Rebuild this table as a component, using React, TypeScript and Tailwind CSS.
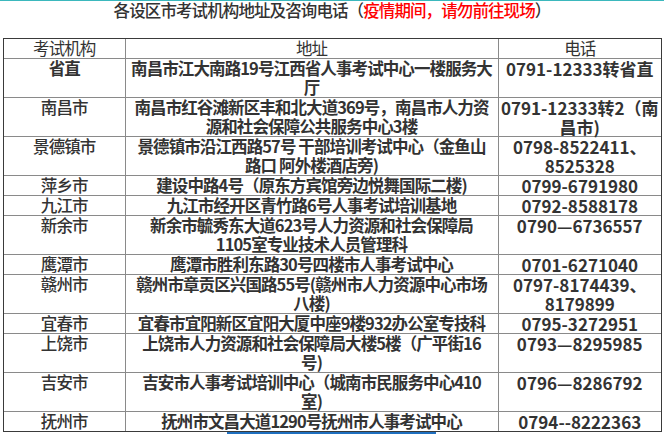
const ROWS: { city: string; addr: string[]; tel: string[]; bold?: boolean }[] = [
  { city: "省直", bold: true, addr: ["南昌市江大南路19号江西省人事考试中心一楼服务大", "厅"], tel: ["0791-12333转省直"] },
  { city: "南昌市", addr: ["南昌市红谷滩新区丰和北大道369号，南昌市人力资", "源和社会保障公共服务中心3楼"], tel: ["0791-12333转2（南", "昌市)"] },
  { city: "景德镇市", addr: ["景德镇市沿江西路57号 干部培训考试中心（金鱼山", "路口 阿外楼酒店旁)"], tel: ["0798-8522411、", "8525328"] },
  { city: "萍乡市", addr: ["建设中路4号（原东方宾馆旁边悦舞国际二楼)"], tel: ["0799-6791980"] },
  { city: "九江市", addr: ["九江市经开区青竹路6号人事考试培训基地"], tel: ["0792-8588178"] },
  { city: "新余市", addr: ["新余市毓秀东大道623号人力资源和社会保障局", "1105室专业技术人员管理科"], tel: ["0790—6736557"] },
  { city: "鹰潭市", addr: ["鹰潭市胜利东路30号四楼市人事考试中心"], tel: ["0701-6271040"] },
  { city: "赣州市", addr: ["赣州市章贡区兴国路55号(赣州市人力资源中心市场", "八楼)"], tel: ["0797-8174439、", "8179899"] },
  { city: "宜春市", addr: ["宜春市宜阳新区宜阳大厦中座9楼932办公室专技科"], tel: ["0795-3272951"] },
  { city: "上饶市", addr: ["上饶市人力资源和社会保障局大楼5楼（广平街16", "号)"], tel: ["0793—8295985"] },
  { city: "吉安市", addr: ["吉安市人事考试培训中心（城南市民服务中心410", "室)"], tel: ["0796—8286792"] },
  { city: "抚州市", addr: ["抚州市文昌大道1290号抚州市人事考试中心"], tel: ["0794--8222363"] },
];

function Lines({ lines }: { lines: string[] }) {
  return (
    <>
      {lines.map((l, i) => (
        <div key={i} className="whitespace-nowrap">{l}</div>
      ))}
    </>
  );
}

export default function App() {
  return (
    <div className="w-[664px] h-[435px] overflow-hidden bg-white border-t border-[#3bb8bd] text-[#333333] font-['Noto_Sans_CJK_SC',sans-serif] text-[16.5px] leading-[19px] tracking-[-0.9px]">
      {/* Title */}
      <div className="text-center font-medium mb-[18px]">
        各设区市考试机构地址及咨询电话（<span className="text-[#ff0000]">疫情期间，请勿前往现场</span>）
      </div>

      {/* Table */}
      <div className="ml-[3px] w-[659px] border border-[#3a3a3a]">
        <table className="w-full table-fixed border-collapse">
          <colgroup>
            <col className="w-[121px]" />
            <col className="w-[373px]" />
            <col />
          </colgroup>
          <thead>
            <tr className="border-b border-[#8a8a8a]">
              <th className="font-normal border-r border-[#8a8a8a] p-0">考试机构</th>
              <th className="font-normal border-r border-[#8a8a8a] p-0">地址</th>
              <th className="font-normal p-0">电话</th>
            </tr>
          </thead>
          <tbody>
            {ROWS.map((r, i) => (
              <tr key={r.city} className={i < ROWS.length - 1 ? "border-b border-[#8a8a8a]" : ""}>
                <td className={`align-top text-center p-0 border-r border-[#8a8a8a] ${r.bold ? "font-bold" : "font-medium"}`}>
                  {r.city}
                </td>
                <td className="align-top text-center p-0 border-r border-[#8a8a8a] font-semibold">
                  <Lines lines={r.addr} />
                </td>
                <td className="align-top text-center p-0 font-bold text-[17px] tracking-normal">
                  <Lines lines={r.tel} />
                </td>
              </tr>
            ))}
          </tbody>
        </table>
      </div>

      {/* bottom scroll marker */}
      <div className="ml-[227px] w-[209px] h-[2px] bg-[#1f6fbf]" />
    </div>
  );
}
